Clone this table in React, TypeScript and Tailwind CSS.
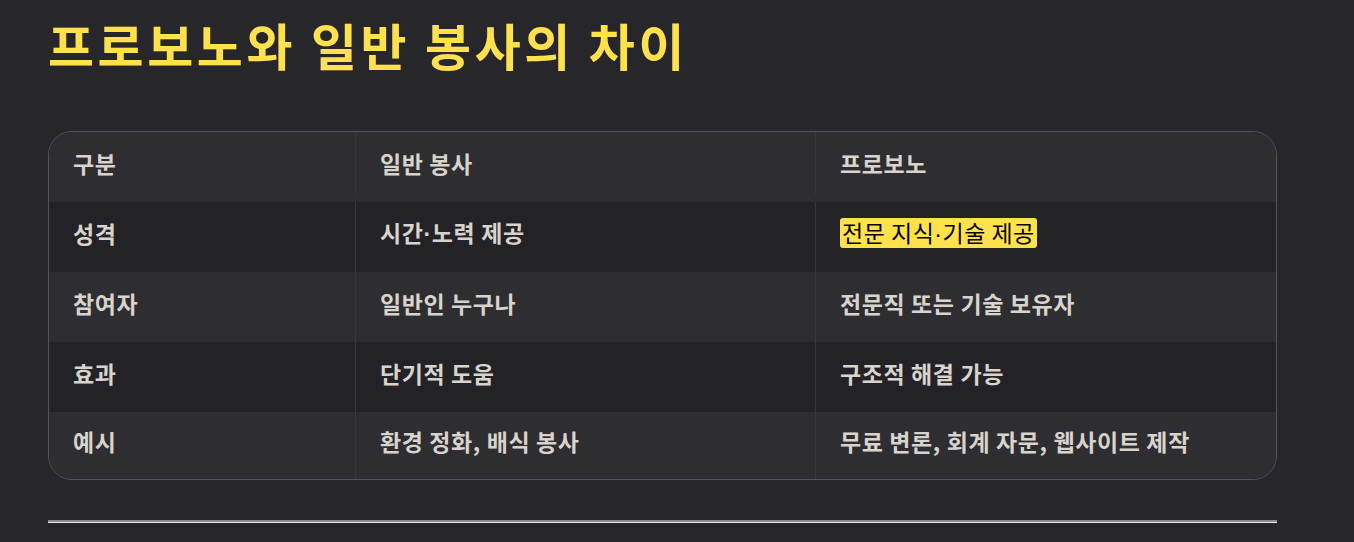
import React from 'react';

const rows: [string, string, string][] = [
  ['성격', '시간·노력 제공', '전문 지식·기술 제공'],
  ['참여자', '일반인 누구나', '전문직 또는 기술 보유자'],
  ['효과', '단기적 도움', '구조적 해결 가능'],
  ['예시', '환경 정화, 배식 봉사', '무료 변론, 회계 자문, 웹사이트 제작'],
];

const font = { fontFamily: '"Noto Sans CJK KR", "Noto Sans", sans-serif' };
const dotFont = { fontFamily: '"Liberation Sans", sans-serif' };

// the middle dot is full width in Noto CJK, use a narrow one
const Cell: React.FC<{ text: string }> = ({ text }) => {
  const parts = text.split('·');
  return (
    <>
      {parts.map((p, i) => (
        <React.Fragment key={i}>
          {i > 0 && <span style={dotFont}>·</span>}
          {p}
        </React.Fragment>
      ))}
    </>
  );
};

const App: React.FC = () => {
  return (
    <div className="min-h-[542px] w-full bg-[#27262b] px-12 pt-[14px]" style={font}>
      <h1 className="text-[50px] font-bold leading-[60px] tracking-[3.6px] text-[#ffe14d]">프로보노와 일반 봉사의 차이</h1>

      <div className="mt-[57px] w-[1229px] overflow-hidden rounded-[24px] border border-[#55545a]">
        {/* header */}
        <div className="grid h-[70px] grid-cols-[306px_460px_1fr] bg-[#2e2d32] pb-2 text-[23px] font-bold tracking-[0.6px] text-[#d8d4cc]">
          <div className="flex items-center pl-6">구분</div>
          <div className="flex items-center border-l border-[#38373c] pl-6">일반 봉사</div>
          <div className="flex items-center border-l border-[#38373c] pl-6">프로보노</div>
        </div>

        {rows.map((r, i) => (
          <div
            key={r[0]}
            className={
              'grid grid-cols-[306px_460px_1fr] text-[23px] font-semibold tracking-[0.6px] text-[#d8d4cc] ' +
              (i % 2 === 0 ? 'bg-[#232227]' : 'bg-[#2e2d32]') +
              (i === rows.length - 1 ? ' h-[67px]' : ' h-[70px]')
            }
          >
            <div className="flex items-center pb-2 pl-6">{r[0]}</div>
            <div className="flex items-center border-l border-[#38373c] pb-2 pl-6">
              <span><Cell text={r[1]} /></span>
            </div>
            <div className="flex items-center border-l border-[#38373c] pb-2 pl-6">
              {i === 0 ? (
                <mark className="rounded-[3px] bg-[#ffe14d] px-[2px] font-normal leading-[28px] tracking-[0.5px] text-black">
                  <Cell text={r[2]} />
                </mark>
              ) : (
                r[2]
              )}
            </div>
          </div>
        ))}
      </div>

      <div className="mt-[40px] h-[3px] w-[1229px] border-t-2 border-b border-t-[#8d8d8d] border-b-[#e8e8e8]" />
    </div>
  );
};

export default App;
